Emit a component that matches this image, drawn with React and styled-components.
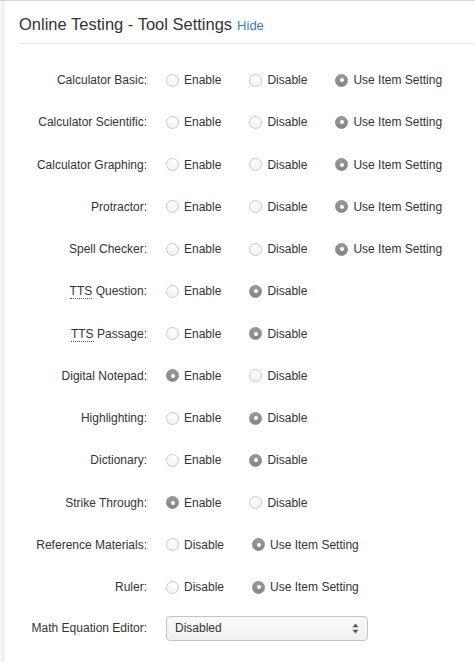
import React from "react";
import styled, { createGlobalStyle } from "styled-components";

const GlobalStyle = createGlobalStyle`
  body {
    margin: 0;
    background: #fff;
    font-family: "Liberation Sans", Arial, sans-serif;
    color: #333;
  }
`;

const settings = [
  { label: "Calculator Basic:", options: ["Enable", "Disable", "Use Item Setting"], checked: 2 },
  { label: "Calculator Scientific:", options: ["Enable", "Disable", "Use Item Setting"], checked: 2 },
  { label: "Calculator Graphing:", options: ["Enable", "Disable", "Use Item Setting"], checked: 2 },
  { label: "Protractor:", options: ["Enable", "Disable", "Use Item Setting"], checked: 2 },
  { label: "Spell Checker:", options: ["Enable", "Disable", "Use Item Setting"], checked: 2 },
  { label: "Question:", abbr: "TTS", options: ["Enable", "Disable"], checked: 1 },
  { label: "Passage:", abbr: "TTS", options: ["Enable", "Disable"], checked: 1 },
  { label: "Digital Notepad:", options: ["Enable", "Disable"], checked: 0 },
  { label: "Highlighting:", options: ["Enable", "Disable"], checked: 1 },
  { label: "Dictionary:", options: ["Enable", "Disable"], checked: 1 },
  { label: "Strike Through:", options: ["Enable", "Disable"], checked: 0 },
  { label: "Reference Materials:", options: ["Disable", "Use Item Setting"], checked: 1 },
  { label: "Ruler:", options: ["Disable", "Use Item Setting"], checked: 1 },
];

const App = () => {
  return (
    <>
      <GlobalStyle />
      <Page>
        <Panel>
          <Header>
            <Title>Online Testing - Tool Settings</Title>
            <HideLink href="#">Hide</HideLink>
          </Header>
          <Form>
            {settings.map((s) => (
              <Row key={s.label + (s.abbr || "")}>
                <Label>
                  {s.abbr && <Abbr>{s.abbr}</Abbr>}
                  {s.abbr ? " " : ""}
                  {s.label}
                </Label>
                <Options>
                  {s.options.map((o, i) => (
                    <Option key={o}>
                      <Radio checked={i === s.checked} />
                      {o}
                    </Option>
                  ))}
                </Options>
              </Row>
            ))}
            <SelectRow>
              <Label>Math Equation Editor:</Label>
              <Select>
                <span>Disabled</span>
                <svg width="7" height="11" viewBox="0 0 7 11">
                  <path d="M3.5 0.5 L6.5 4.2 H0.5 Z" fill="#555" />
                  <path d="M3.5 10.5 L6.5 6.8 H0.5 Z" fill="#555" />
                </svg>
              </Select>
            </SelectRow>
          </Form>
        </Panel>
      </Page>
    </>
  );
};

export default App;

const Page = styled.div`
  display: flex;
  min-height: 662px;
  border-top: 1px solid #d6d6d6;
  box-sizing: border-box;
  &::before {
    content: "";
    width: 3px;
    background: #f7f7f7;
    border-right: 1px solid #e4e4e4;
    flex-shrink: 0;
  }
`;

const Panel = styled.div`
  flex: 1;
  padding-left: 15px;
`;

const Header = styled.div`
  display: flex;
  align-items: baseline;
  gap: 5px;
  padding: 14px 0 9px 0;
  border-bottom: 1px solid #e8e8e8;
`;

const Title = styled.div`
  font-size: 16.5px;
  color: #333;
`;

const HideLink = styled.a`
  font-size: 13px;
  color: #3a7bbf;
  text-decoration: none;
`;

const Form = styled.div`
  display: flex;
  flex-direction: column;
  padding-top: 15px;
  font-size: 12px;
`;

const Row = styled.div`
  display: flex;
  align-items: center;
  height: 42.25px;
`;

const SelectRow = styled(Row)`
  height: 40px;
`;

const Label = styled.div`
  width: 128px;
  text-align: right;
  margin-right: 19px;
  color: #333;
  white-space: nowrap;
`;

const Abbr = styled.span`
  border-bottom: 1px dotted #555;
`;

const Options = styled.div`
  display: flex;
  align-items: center;
  white-space: nowrap;
`;

const Option = styled.label`
  display: flex;
  align-items: center;
  margin-right: 28px;
  color: #333;
`;

const Radio = styled.span`
  width: 13px;
  height: 13px;
  border-radius: 50%;
  box-sizing: border-box;
  margin-right: 5px;
  display: inline-flex;
  align-items: center;
  justify-content: center;
  flex-shrink: 0;
  border: 1px solid ${(p) => (p.checked ? "#8a8a8a" : "#c9c9c9")};
  background: ${(p) =>
    p.checked ? "linear-gradient(#9a9a9a, #858585)" : "linear-gradient(#fff, #f3f3f3)"};
  &::after {
    content: "";
    width: 4px;
    height: 4px;
    border-radius: 50%;
    background: #fff;
    display: ${(p) => (p.checked ? "block" : "none")};
  }
`;

const Select = styled.div`
  width: 202px;
  height: 25px;
  box-sizing: border-box;
  border: 1px solid #c4c4c4;
  border-radius: 4px;
  background: linear-gradient(#fafafa, #f0f0f0);
  display: flex;
  align-items: center;
  justify-content: space-between;
  padding: 0 8px 0 8px;
  color: #333;
`;
